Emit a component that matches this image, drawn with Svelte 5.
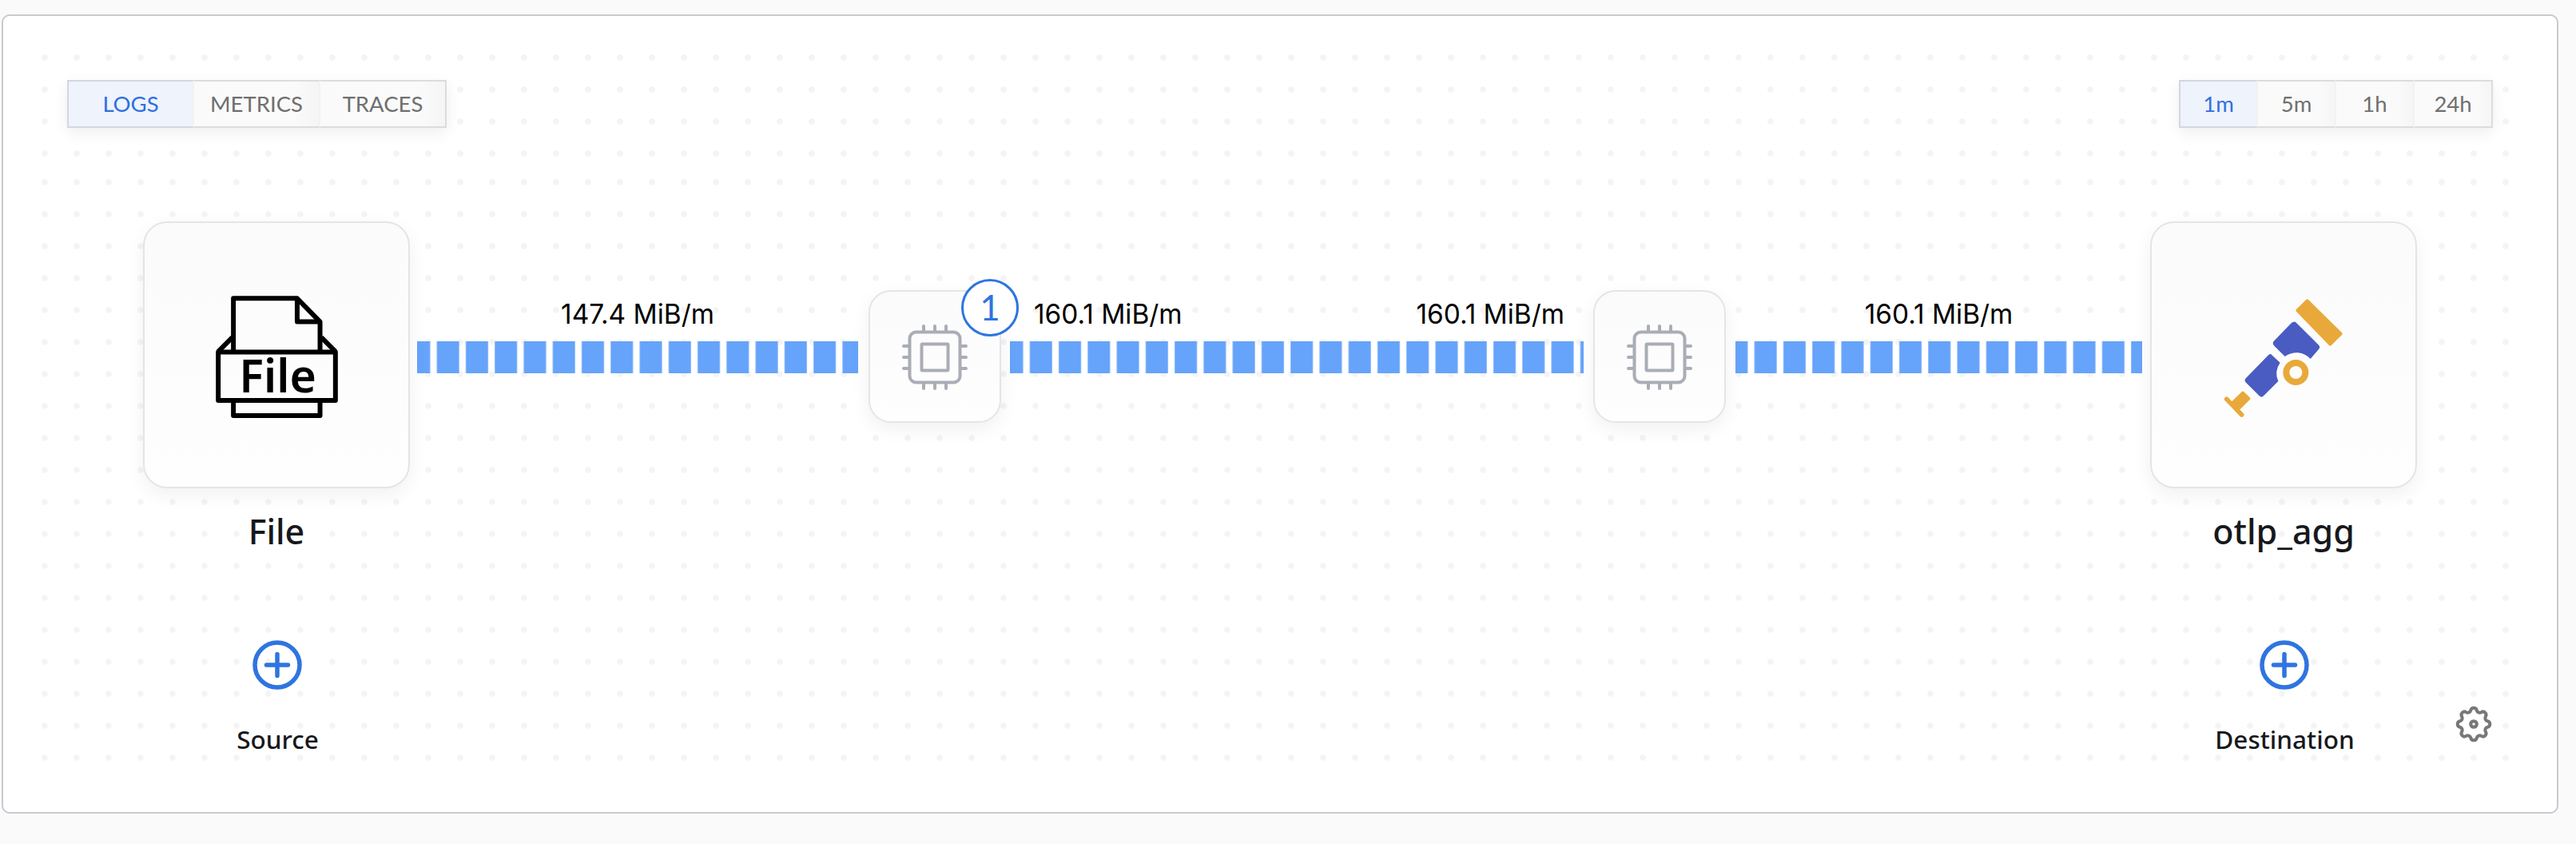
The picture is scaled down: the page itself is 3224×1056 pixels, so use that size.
<script lang="ts">
  const signals = ["LOGS", "METRICS", "TRACES"]
  const ranges = ["1m", "5m", "1h", "24h"]

  let signal = $state("LOGS")
  let range = $state("1m")
</script>

{#snippet toggle(items: string[], active: string, pick: (v: string) => void, cls: string)}
  <div class="toggle {cls}">
    {#each items as item}
      <button class:active={item === active} onclick={() => pick(item)}>{item}</button>
    {/each}
  </div>
{/snippet}

{#snippet edge(width: number, left: number, right: number, offset: number, labels: string[])}
  <div class="edge" style="width:{width}px;margin-left:{left}px;margin-right:{right}px">
    <div class="rates" class:split={labels.length > 1}>
      {#each labels as label}
        <span>{label}</span>
      {/each}
    </div>
    <div class="flow" style="background-position-x:{offset}px"></div>
  </div>
{/snippet}

{#snippet processor(count: number)}
  <div class="card proc">
    <svg width="84" height="84" viewBox="0 0 84 84" fill="none" stroke="#aaadb6" stroke-width="4" stroke-linecap="round">
      <rect x="10.5" y="10.5" width="63" height="63" rx="8" />
      <rect x="25.5" y="25.5" width="33" height="33" rx="1" />
      <path d="M28 3v7M42 3v7M56 3v7M28 74v7M42 74v7M56 74v7M3 28h7M3 42h7M3 56h7M74 28h7M74 42h7M74 56h7" />
    </svg>
    {#if count}
      <span class="badge">{count}</span>
    {/if}
  </div>
{/snippet}

{#snippet addButton(label: string)}
  <button class="add">
    <svg width="62" height="62" viewBox="0 0 62 62" fill="none" stroke="#2f74e0" stroke-linecap="round">
      <circle cx="31" cy="31" r="28" stroke-width="5.5" />
      <path d="M31 17.500v27M17.500 31h27" stroke-width="5.500" />
    </svg>
    <span>{label}</span>
  </button>
{/snippet}

<div class="page">
  <section class="panel">
    <div class="dots" aria-hidden="true">
      <div class="dots-top"></div>
      <div class="dots-rest"></div>
    </div>

    <header class="toolbar">
      {@render toggle(signals, signal, (v) => (signal = v), "signals")}
      {@render toggle(ranges, range, (v) => (range = v), "ranges")}
    </header>

    <div class="graph">
      <div class="node">
        <div class="card big">
          <svg class="file-icon" width="153" height="153" viewBox="358 330 459 460" fill="none" stroke="#000" stroke-width="18" stroke-linejoin="round">
            <path d="M424 535V340H664L750 428V535" />
            <path d="M664 345V428H750" />
            <rect x="367" y="542" width="441" height="182" />
            <path d="M367 540L420 487M808 540L755 487" />
            <path d="M424 725V781H750V725" />
            <text x="591" y="694" text-anchor="middle" class="file-text">File</text>
          </svg>
        </div>
        <div class="name">File</div>
        {@render addButton("Source")}
      </div>

      {@render edge(552, 9, 13, -11.8, ["147.4 MiB/m"])}
      {@render processor(1)}
      {@render edge(718, 11, 12, -11.7, ["160.1 MiB/m", "160.1 MiB/m"])}
      {@render processor(0)}
      {@render edge(509, 12, 10, -12.8, ["160.1 MiB/m"])}

      <div class="node">
        <div class="card big">
          <svg class="scope-icon" width="150" height="150" viewBox="370 336 450 450">
            <path d="M684 346L810 470L770 509L647 382Z" fill="#e9a93a" stroke="#e9a93a" stroke-width="12" stroke-linejoin="round" />
            <path d="M634 425Q640 424 644 430L727 512Q734 520 727 528L696 564A72 72 0 0 0 600 555L560 515Q550 505 560 496L624 430Q628 425 634 425Z" fill="#4a5cc1" />
            <path d="M547 546L582 578A72 72 0 0 0 575 648L520 703Q512 711 504 703L454 653Q445 645 454 636L538 550Q543 545 547 546Z" fill="#4a5cc1" />
            <circle cx="641" cy="615" r="36" fill="none" stroke="#e9a93a" stroke-width="24" />
            <path d="M442 692L464 713L425 752L403 730Z" fill="#e9a93a" stroke="#e9a93a" stroke-width="12" stroke-linejoin="round" />
            <path d="M381 715L438 774" stroke="#e9a93a" stroke-width="17" stroke-linecap="round" />
          </svg>
        </div>
        <div class="name">otlp_agg</div>
        {@render addButton("Destination")}
      </div>
    </div>

    <button class="gear" aria-label="Settings">
      <svg width="54" height="54" viewBox="0 0 24 24" fill="none" stroke="#777" stroke-width="1.8" stroke-linecap="round" stroke-linejoin="round">
        <path d="M10.325 4.317c.426-1.756 2.924-1.756 3.35 0a1.724 1.724 0 002.573 1.066c1.543-.94 3.31.826 2.37 2.37a1.724 1.724 0 001.065 2.572c1.756.426 1.756 2.924 0 3.35a1.724 1.724 0 00-1.066 2.573c.94 1.543-.826 3.31-2.37 2.37a1.724 1.724 0 00-2.572 1.065c-.426 1.756-2.924 1.756-3.35 0a1.724 1.724 0 00-2.573-1.066c-1.543.94-3.31-.826-2.37-2.37a1.724 1.724 0 00-1.065-2.572c-1.756-.426-1.756-2.924 0-3.35a1.724 1.724 0 001.066-2.573c-.94-1.543.826-3.31 2.37-2.37.996.608 2.296.07 2.572-1.065z" />
        <circle cx="12" cy="12" r="1.7" />
      </svg>
    </button>
  </section>
</div>

<style>
  :global(body) {
    margin: 0;
    background: #fafafa;
    font-family: "Lato", "Noto Sans", sans-serif;
    color: #17181c;
  }
  .page {
    width: 3224px;
    height: 1056px;
    padding: 18px 0 0 2px;
    box-sizing: border-box;
    overflow: hidden;
  }
  .panel {
    position: relative;
    box-sizing: border-box;
    width: 3200px;
    height: 1000px;
    padding: 80px 80px 0;
    background: #fff;
    border: 2px solid #c9c9d1;
    border-radius: 10px;
  }
  .dots {
    position: absolute;
    left: 32px;
    top: 32px;
    width: 3120px;
  }
  .dots-top,
  .dots-rest {
    background-image: radial-gradient(circle at 20px 20px, #f4f4f5 3.4px, transparent 4.2px);
    background-size: 40px 40px;
  }
  .dots-top {
    height: 156px;
  }
  .dots-rest {
    height: 760px;
  }
  .toolbar {
    position: relative;
    display: flex;
    justify-content: space-between;
  }
  .toggle {
    display: flex;
    height: 60px;
    box-shadow: 0 6px 18px rgba(0, 0, 0, 0.07);
  }
  .toggle button {
    box-sizing: border-box;
    height: 60px;
    padding: 0 0 2px;
    background: linear-gradient(90deg, #fafafa 80%, #f5f5f6);
    border: 2px solid #dcdcdf;
    border-left: 0;
    border-right-color: #f2f2f3;
    font-family: inherit;
    font-size: 27.5px;
    color: #6f6f6f;
    cursor: pointer;
  }
  .toggle button:first-child {
    border-left: 2px solid #dcdcdf;
  }
  .toggle button:last-child {
    border-right-color: #dcdcdf;
  }
  .toggle button.active {
    background: #eef3fc;
    border-color: #d0d7e4;
    border-right-color: #f2f2f3;
    color: #2f6fe0;
  }
  .signals button {
    width: 158px;
  }
  .signals button:first-child {
    width: 159px;
  }
  .ranges button {
    width: 98px;
  }
  .ranges button:first-child {
    width: 99px;
  }
  .graph {
    position: relative;
    display: flex;
    align-items: flex-start;
    margin: 117px 0 0 95px;
  }
  .node {
    display: flex;
    flex-direction: column;
    width: 334px;
    align-items: center;
  }
  .card {
    position: relative;
    display: flex;
    align-items: center;
    justify-content: center;
    box-sizing: border-box;
    background: linear-gradient(#fbfbfb, #fefefe);
    border: 2px solid #e4e4ea;
    box-shadow: 0 8px 24px rgba(0, 0, 0, 0.06);
  }
  .big {
    width: 334px;
    height: 334px;
    border-radius: 30px;
  }
  .file-icon {
    margin-top: 5px;
  }
  .scope-icon {
    margin-top: 8px;
  }
  .proc {
    flex: none;
    width: 166px;
    height: 166px;
    margin-top: 86px;
    border-radius: 28px;
  }
  .proc svg {
    margin-top: 2px;
  }
  .badge {
    position: absolute;
    right: -24px;
    top: -16px;
    box-sizing: border-box;
    width: 72px;
    height: 72px;
    line-height: 64px;
    text-align: center;
    background: #fff;
    border: 3.5px solid #2f74e0;
    border-radius: 50%;
    font-size: 44px;
    color: #2f74e0;
  }
  .file-text {
    font-family: "Noto Sans", sans-serif;
    font-size: 172px;
    font-weight: 600;
    fill: #000;
    stroke: none;
  }
  .name {
    margin-top: 28px;
    font-family: "Noto Sans", sans-serif;
    font-size: 43px;
    line-height: 52px;
    font-weight: 500;
  }
  .add {
    display: flex;
    flex-direction: column;
    align-items: center;
    margin: 110px 0 0 3px;
    padding: 0;
    background: none;
    border: 0;
    font-family: "Noto Sans", sans-serif;
    font-size: 31.5px;
    font-weight: 500;
    color: #17181c;
  }
  .add span {
    margin-top: 42px;
    line-height: 40px;
  }
  .edge {
    flex: none;
    padding-top: 96px;
  }
  .rates {
    display: flex;
    justify-content: center;
    height: 40px;
    margin-bottom: 14px;
    font-family: "Inter", "Liberation Sans", sans-serif;
    font-size: 33.4px;
    line-height: 40px;
    color: #000;
  }
  .rates.split {
    justify-content: space-between;
    padding: 0 24px 0 30px;
  }
  .flow {
    height: 40px;
    background-image: linear-gradient(
      90deg,
      #8fbcfc 0 1px,
      #66a3fa 1px 27.28px,
      #8fbcfc 27.28px 28.28px,
      transparent 28.28px
    );
    background-size: 36.28px 100%;
  }
  .gear {
    position: absolute;
    left: 3065px;
    top: 859px;
    padding: 0;
    background: none;
    border: 0;
    line-height: 0;
  }
</style>
